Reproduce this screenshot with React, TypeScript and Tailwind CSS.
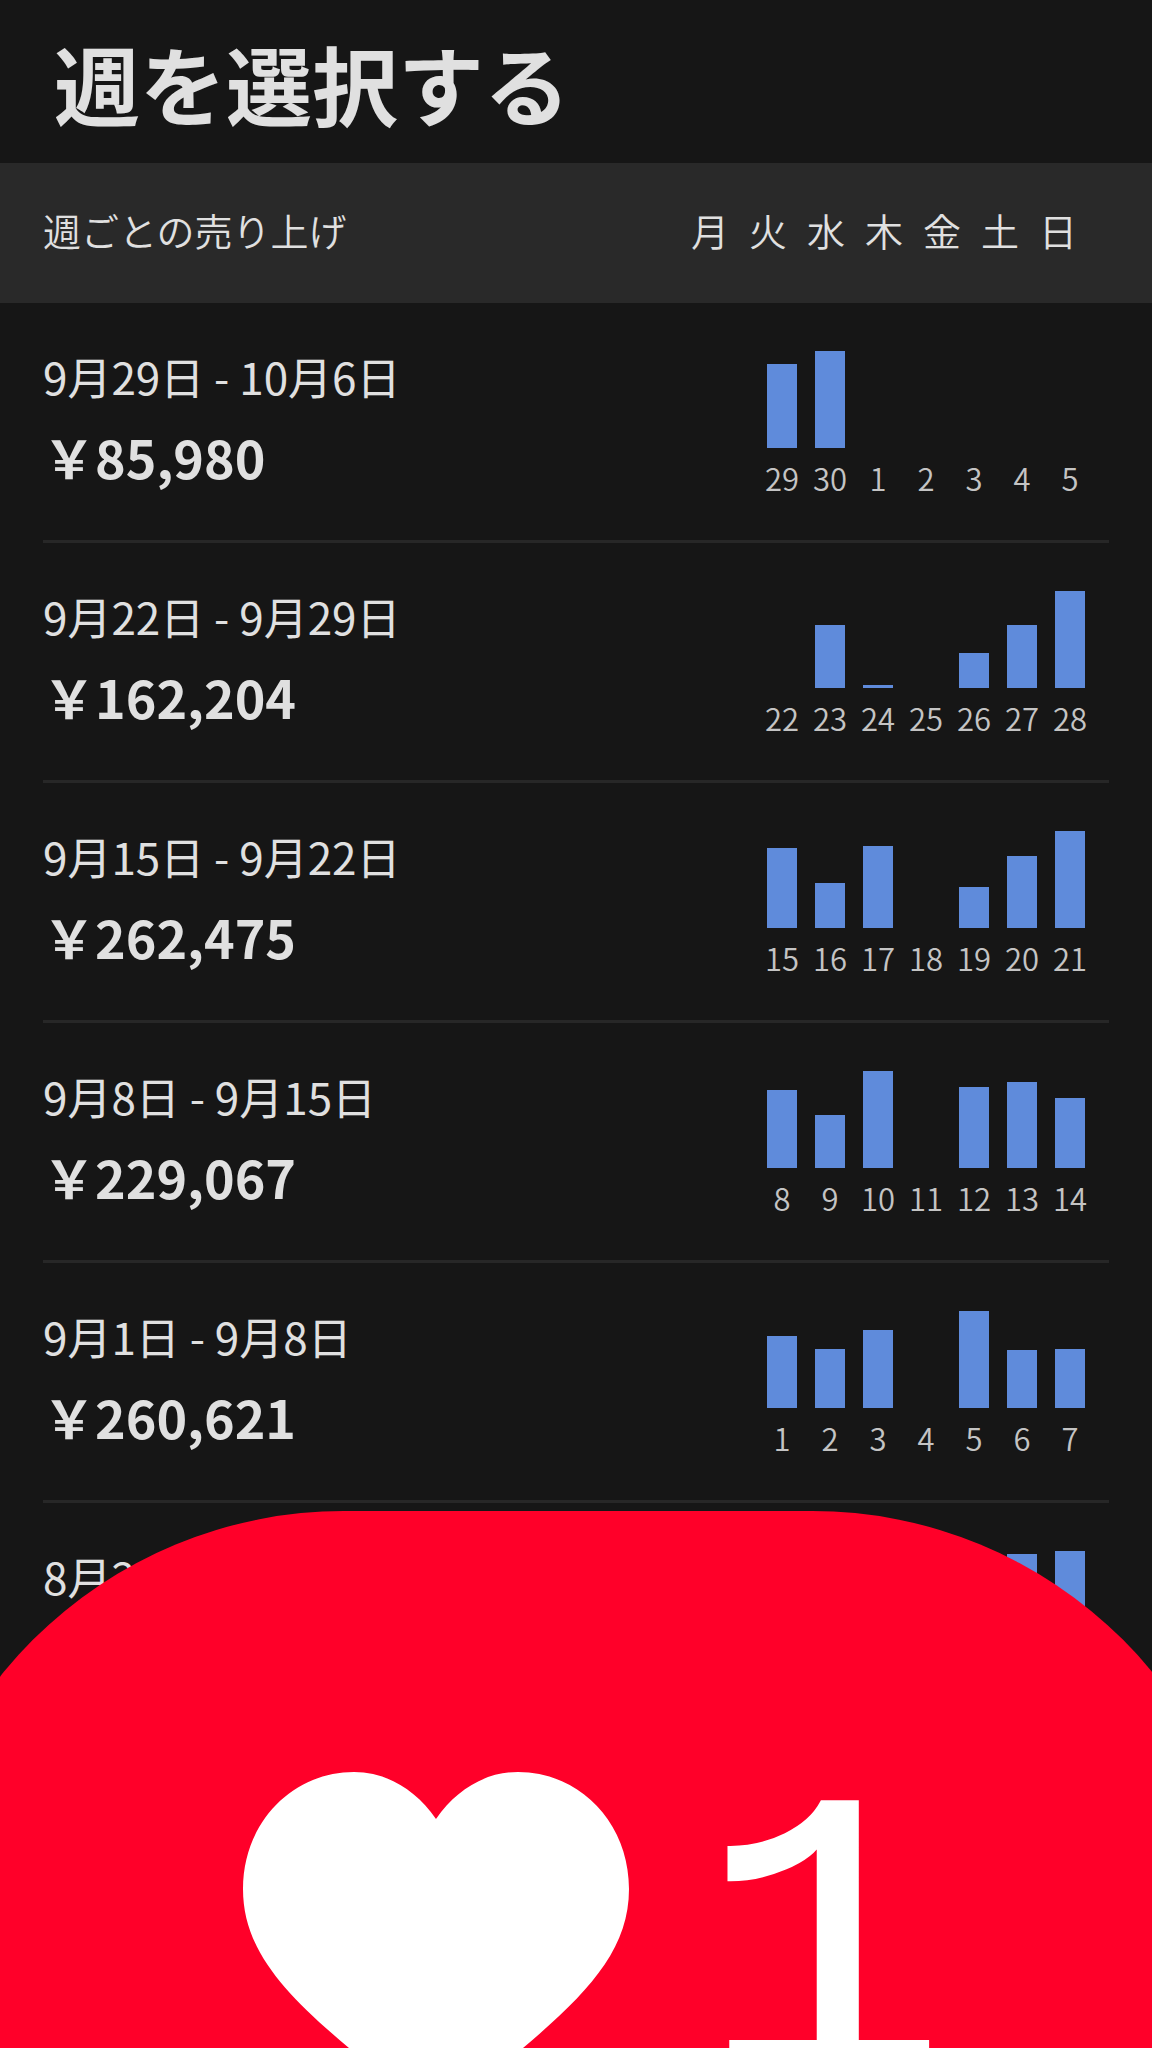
const DAYS = ['月', '火', '水', '木', '金', '土', '日']

const YEN = '\uffe5'

type Week = {
  range: string
  total?: string
  dates?: number[]
  bars: number[]
}

const WEEKS: Week[] = [
  { range: '9月29日 - 10月6日', total: '85,980', dates: [29, 30, 1, 2, 3, 4, 5], bars: [84, 97, 0, 0, 0, 0, 0] },
  { range: '9月22日 - 9月29日', total: '162,204', dates: [22, 23, 24, 25, 26, 27, 28], bars: [0, 63, 3, 0, 35, 63, 97] },
  { range: '9月15日 - 9月22日', total: '262,475', dates: [15, 16, 17, 18, 19, 20, 21], bars: [80, 45, 82, 0, 41, 72, 97] },
  { range: '9月8日 - 9月15日', total: '229,067', dates: [8, 9, 10, 11, 12, 13, 14], bars: [78, 53, 97, 0, 81, 86, 70] },
  { range: '9月1日 - 9月8日', total: '260,621', dates: [1, 2, 3, 4, 5, 6, 7], bars: [72, 59, 78, 0, 97, 58, 59] },
  { range: '8月2', bars: [0, 0, 0, 0, 0, 94, 97] },
]

function WeekChart({ dates, bars }: Pick<Week, 'dates' | 'bars'>) {
  return (
    <span className="mr-[15px] grid shrink-0 grid-cols-7">
      {bars.map((height, i) => (
        <span key={i} className="flex w-12 flex-col items-center">
          <span className="flex h-[97px] items-end">
            <span className="w-[30px] bg-[#5f8bdb]" style={{ height }} />
          </span>
          {dates && (
            <span className="mt-2 text-[31px] font-[350] leading-[44px] text-[#c4c4c4]">{dates[i]}</span>
          )}
        </span>
      ))}
    </span>
  )
}

function WeekRow({ week }: { week: Week }) {
  return (
    <li className="border-b-3 border-[#272727]">
      <button type="button" className="flex h-[237px] w-full items-start justify-between pt-12 text-left">
        <span className="flex flex-col">
          <span className="text-[44px] leading-[50px]">{week.range}</span>
          {week.total && (
            <span className="mt-5 text-[52px] font-bold leading-[72px]">
              {YEN}
              {week.total}
            </span>
          )}
        </span>
        <WeekChart dates={week.dates} bars={week.bars} />
      </button>
    </li>
  )
}

function LikeBubble() {
  return (
    <div
      role="status"
      className="absolute -left-[96px] -right-[100px] bottom-0 h-[537px] overflow-hidden rounded-t-[440px] bg-[#ff0029] text-white"
    >
      <div className="flex items-start pl-[339px] pt-[261px]">
        <svg viewBox="0 0 386 350" className="w-[386px] shrink-0" fill="currentColor" aria-hidden="true">
          <path d="M193 47C213 18 242 0 275 0C337 0 386 51 386 117C386 178 344 222 280 276L193 350L106 276C42 222 0 178 0 117C0 51 49 0 111 0C144 0 173 18 193 47Z" />
        </svg>
        <span className="ml-[72px] font-['Liberation_Mono',monospace] text-[408px] leading-[384px] [-webkit-text-stroke:6px_white]">
          1
        </span>
      </div>
    </div>
  )
}

export default function App() {
  return (
    <main
      lang="ja"
      className="relative min-h-screen overflow-hidden bg-[#161616] font-['Noto_Sans_CJK_JP',sans-serif] text-[#e0e0e0]"
    >
      <h1 className="px-[54px] pb-8 pt-[34px] text-[86px] font-bold leading-[97px]">週を選択する</h1>

      <div className="flex items-center justify-between bg-[#292929] px-[43px] pb-12 pt-[42px] text-[38px] font-[350] leading-[50px]">
        <h2>週ごとの売り上げ</h2>
        <div className="mr-8 flex gap-5">
          {DAYS.map((day) => (
            <span key={day}>{day}</span>
          ))}
        </div>
      </div>

      <ul className="px-[43px]">
        {WEEKS.map((week) => (
          <WeekRow key={week.range} week={week} />
        ))}
      </ul>

      <LikeBubble />
    </main>
  )
}
